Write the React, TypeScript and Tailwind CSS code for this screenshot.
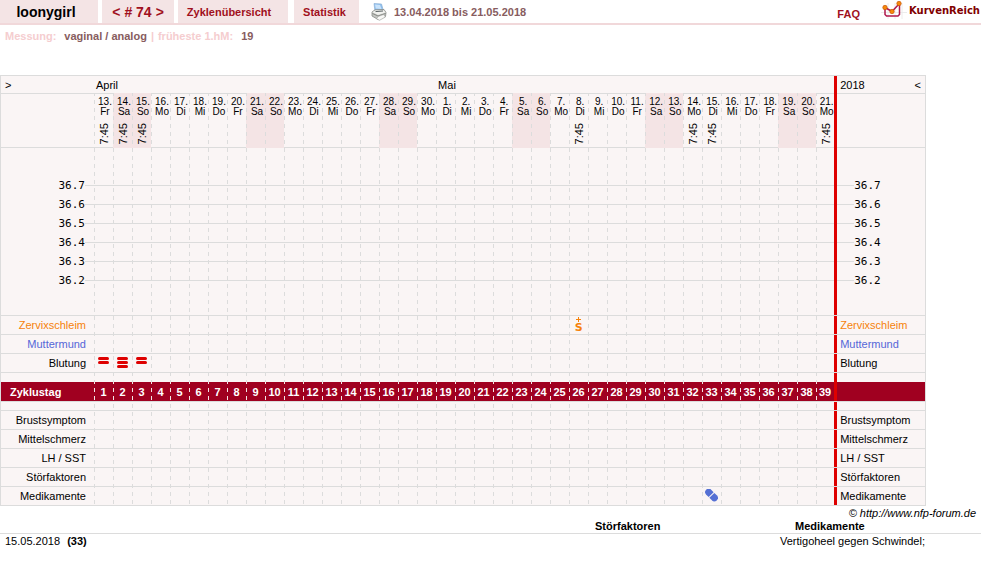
import React from 'react';

const WEEKDAYS = ['Fr', 'Sa', 'So', 'Mo', 'Di', 'Mi', 'Do'];
const TIMES: Record<number, string> = {
  1: '7:45', 2: '7:45', 3: '7:45', 26: '7:45', 32: '7:45', 33: '7:45', 39: '7:45',
};
const BLEEDING: Record<number, number> = { 1: 2, 2: 3, 3: 2 };
const TEMPERATURES = ['36.7', '36.6', '36.5', '36.4', '36.3', '36.2'];

const DAYS = Array.from({ length: 39 }, (_, i) => {
  const weekday = WEEKDAYS[i % 7];
  return {
    cycleDay: i + 1,
    date: i < 18 ? 13 + i : i - 17,
    weekday,
    weekend: weekday === 'Sa' || weekday === 'So',
    time: TIMES[i + 1],
  };
});

const dash = 'bg-[linear-gradient(#dcdcdc_4px,transparent_4px)] bg-[length:1px_8px] bg-repeat-y';
const midLine = 'bg-[linear-gradient(#dcdcdc,#dcdcdc)] bg-[length:100%_1px] bg-[position:0_9px] bg-no-repeat';
const rightTopLine = 'bg-[linear-gradient(#dcdcdc,#dcdcdc)] bg-[length:100%_1px] bg-[position:3px_0] bg-no-repeat';
const line = 'border-t border-[#dcdcdc]';

function Spacer({ height, lined = true }: { height: string; lined?: boolean }) {
  const edge = lined ? line : '';
  return (
    <tr className={height}>
      <td className={edge} />
      {DAYS.map((d) => (
        <td key={d.cycleDay} className={edge} />
      ))}
      <td className={edge} />
    </tr>
  );
}

function SymptomRow({
  label,
  color = 'text-black',
  render,
}: {
  label: string;
  color?: string;
  render?: (day: number) => React.ReactNode;
}) {
  return (
    <tr className="h-[19px]">
      <th scope="row" className={`${line} ${color} pr-2 text-right font-normal`}>{label}</th>
      {DAYS.map((d) => (
        <td key={d.cycleDay} className={`${line} ${color}`}>{render?.(d.cycleDay)}</td>
      ))}
      <td className={`${line} ${color} pl-1.5`}>{label}</td>
    </tr>
  );
}

function Bleeding({ level }: { level: number }) {
  return (
    <svg width="13" height="12" viewBox="0 0 13 12" className="mx-auto block" aria-hidden="true">
      {Array.from({ length: level }, (_, i) => (
        <rect key={i} x="1" y={i * 4} width="11" height="3" rx="1.5" fill="#de0000" />
      ))}
    </svg>
  );
}

/* A small cross above the quality letter */
function Mucus() {
  return (
    <div className="flex flex-col items-center font-['DejaVu_Sans',sans-serif] font-bold">
      <svg width="5" height="5" viewBox="0 0 5 5" className="block" aria-hidden="true">
        <path d="M2 0H3V2H5V3H3V5H2V3H0V2H2Z" fill="currentColor" />
      </svg>
      <span className="text-[11px] leading-[11px]">S</span>
    </div>
  );
}

function Pill() {
  return (
    <svg width="13" height="14" viewBox="0 0 13 14" className="mx-auto block" aria-hidden="true">
      <g transform="rotate(45 6.500 6)" fill="#5570d4">
        <path d="M6 2.500V9.500H2.500A3.500 3.500 0 0 1 2.500 2.500Z" />
        <path d="M7 2.500H10.500A3.500 3.500 0 0 1 10.500 9.500H7Z" />
      </g>
    </svg>
  );
}

function Printer() {
  return (
    <svg width="16" height="18" viewBox="0 0 16 18" aria-hidden="true">
      <path d="M3 .5 10.500 1 12.500 8 4 8.500Z" fill="#8fc0ee" stroke="#8fb2d6" strokeWidth=".7" />
      <path d="M4 1.500 9 2 10.500 6 4.800 5.500Z" fill="#c9e3fb" />
      <path d="M1 9 4 6.800 13 6.500 15 9.500 14.500 13.500 7 16.500 1 13Z" fill="#c4c6c2" stroke="#888a86" strokeWidth=".8" />
      <path d="M1.300 9.200 4.300 7.600 12.800 7.200 14.500 9.600 7 12Z" fill="#f1f2ef" />
      <path d="M4.500 8.600 12 8" stroke="#5f6668" strokeWidth="1" />
      <path d="M1.500 10.500 7 13 14.500 10.500" fill="none" stroke="#777a76" strokeWidth=".8" />
      <path d="M7 13.500 12.500 11.500 14.500 14 8.500 17.300 5.500 15.800Z" fill="#f8f8f6" stroke="#999b97" strokeWidth=".6" />
    </svg>
  );
}

function Logo() {
  return (
    <svg width="26" height="19" viewBox="0 0 26 19" aria-hidden="true">
      <path d="M0 12.500H26M7 3V19M14 3V19M21 3V19" stroke="#ececec" strokeWidth="1" />
      <path d="M4 7V14.500L5.500 16H17L18.500 14.500V5M4 7.500 11 11.500 18 4" fill="none" stroke="#b0184c" strokeWidth="1.500" />
      <g fill="#f68a0a" stroke="#c8560a" strokeWidth=".7">
        <circle cx="4" cy="7.500" r="2.200" />
        <circle cx="11" cy="11.500" r="2.200" />
        <circle cx="18" cy="3.500" r="2.200" />
      </g>
    </svg>
  );
}

const tab = 'flex h-full items-center justify-center bg-[#f4e4e5]';

export default function App() {
  return (
    <div className="min-h-screen bg-white font-['Liberation_Sans',Arial,sans-serif] text-[11px] leading-[14px] text-black">
      <header className="flex h-[25px] items-center border-b-2 border-[#f1d8da] font-bold text-[#a01020]">
        <nav className="flex h-full items-center">
          <a href="#profil" className={`${tab} mr-1 w-[98px] pr-1.5 text-[14px] text-black`}>loonygirl</a>
          <div className={`${tab} mr-1 w-[72px] gap-1 text-[14px]`}>
            <a href="#vorheriger" aria-label="Vorheriger Zyklus">&lt;</a>
            <span># 74</span>
            <a href="#naechster" aria-label="Nächster Zyklus">&gt;</a>
          </div>
          <a href="#zyklen" className={`${tab} mr-1.5 w-[110px] pr-2`}>Zyklenübersicht</a>
          <a href="#statistik" className={`${tab} mr-3 w-[65px] pr-1`}>Statistik</a>
          <a href="#drucken" aria-label="Drucken" className="mr-[7px]"><Printer /></a>
          <span className="text-[#875c5e]">13.04.2018 bis 21.05.2018</span>
        </nav>
        <a href="#faq" className="mr-[21px] ml-auto pt-1">FAQ</a>
        <a href="#start" className="flex h-full items-start gap-0.5 font-['DejaVu_Sans',sans-serif] text-[#800000]">
          <Logo />
          <span className="pt-1 pr-px text-[10px]">KurvenReich</span>
        </a>
      </header>

      <div className="flex h-[22px] items-center pl-[5px] font-bold text-[#875c5e]">
        <span className="mr-2 text-[#f5cdcf]">Messung:</span>
        <span className="mr-1">vaginal / analog</span>
        <span className="mr-1 text-[#f5cdcf]">|</span>
        <span className="mr-2 text-[#f5cdcf]">früheste 1.hM:</span>
        <span>19</span>
      </div>

      <main className="mt-7">
        <div className="mr-[55px] min-w-[926px] border border-[#dcdcdc] bg-[#faf5f5]">
          <table className="w-full table-fixed border-separate border-spacing-0 [&_td]:py-0 [&_th]:py-0">
            <colgroup>
              <col className="w-[93px]" />
              {DAYS.map((d) => (
                <col key={d.cycleDay} className={d.cycleDay === 39 ? `w-[18px] ${dash}` : `w-[19px] ${dash}`} />
              ))}
              <col className="bg-[linear-gradient(to_right,#de0000_3px,transparent_3px)]" />
            </colgroup>
            <thead>
              <tr className="h-[17px]">
                <th className="pl-1 text-left font-normal"><a href="#zurueck" aria-label="Zurück">&gt;</a></th>
                <th colSpan={18} className="bg-[#faf5f5] pl-0.5 text-left font-normal">April</th>
                <th colSpan={21} className="bg-[#faf5f5] pl-0.5 text-left font-normal">Mai</th>
                <th className="pr-1 pl-1.5 font-normal">
                  <div className="flex justify-between">
                    <span>2018</span>
                    <a href="#weiter" aria-label="Weiter">&lt;</a>
                  </div>
                </th>
              </tr>
              <tr className="h-[54px]">
                <td className={line} />
                {DAYS.map((d) => (
                  <th
                    key={d.cycleDay}
                    scope="col"
                    className={`align-top text-[10px] leading-[10px] font-normal ${
                      d.weekend ? `${dash} bg-[#f4e4e5] bg-[position:0_-1px]` : line
                    }`}
                  >
                    <div className={`flex flex-col items-center pl-[3px] ${d.weekend ? 'pt-1' : 'pt-[3px]'}`}>
                      <span>{d.date}.</span>
                      <span>{d.weekday}</span>
                      {d.time && (
                        <span className="mt-1.5 mr-0.5 rotate-180 text-[11px] leading-3 [writing-mode:vertical-rl]">{d.time}</span>
                      )}
                    </div>
                  </th>
                ))}
                <td className={rightTopLine} />
              </tr>
            </thead>
            <tbody>
              <tr className="h-[29px]">
                <td className={line} />
                {DAYS.map((d) => (
                  <td key={d.cycleDay} className={d.weekend ? 'border-t border-[#f4e4e5]' : line} />
                ))}
                <td className={rightTopLine} />
              </tr>
              {TEMPERATURES.map((t) => (
                <tr key={t} className="h-[19px] font-['DejaVu_Sans_Mono',monospace]">
                  <th scope="row" className="font-normal">
                    <div className="flex items-center justify-end">
                      {t}<span className="h-px w-[9px] bg-[#dcdcdc]" />
                    </div>
                  </th>
                  {DAYS.map((d) => (
                    <td key={d.cycleDay} className={midLine} />
                  ))}
                  <td className="pl-[3px]">
                    <div className="flex items-center">
                      <span className="h-px w-[17px] bg-[#dcdcdc]" />{t}
                    </div>
                  </td>
                </tr>
              ))}
              <Spacer height="h-[25px]" lined={false} />
              <SymptomRow label="Zervixschleim" color="text-[#f6820a]" render={(day) => day === 26 && <Mucus />} />
              <SymptomRow label="Muttermund" color="text-[#5566d8]" />
              <SymptomRow label="Blutung" render={(day) => BLEEDING[day] && <Bleeding level={BLEEDING[day]} />} />
              <Spacer height="h-[10px]" />
              <tr className="h-[19px] font-bold text-white">
                <th scope="row" className="bg-[#a00020] pl-[9px] text-left">Zyklustag</th>
                {DAYS.map((d) => (
                  <td
                    key={d.cycleDay}
                    className="bg-[#a00020] bg-[linear-gradient(#f4e4e5_4px,transparent_4px)] bg-[length:1px_8px] bg-[position:0_-2px] bg-repeat-y text-center"
                  >
                    {d.cycleDay}
                  </td>
                ))}
                <td className="bg-[linear-gradient(to_right,#de0000_3px,#a00020_3px)]" />
              </tr>
              <Spacer height="h-[9px]" />
              <SymptomRow label="Brustsymptom" />
              <SymptomRow label="Mittelschmerz" />
              <SymptomRow label="LH / SST" />
              <SymptomRow label="Störfaktoren" />
              <SymptomRow label="Medikamente" render={(day) => day === 33 && <Pill />} />
            </tbody>
          </table>
        </div>
        <p className="pr-[5px] text-right italic">© http://www.nfp-forum.de</p>
        <table className="w-full table-fixed border-separate border-spacing-0">
          <colgroup>
            <col className="w-[595px]" />
            <col className="w-[185px]" />
            <col />
          </colgroup>
          <thead>
            <tr className="text-left leading-[13px]">
              <td />
              <th>Störfaktoren</th>
              <th className="pl-[15px]">Medikamente</th>
            </tr>
          </thead>
          <tbody>
            <tr className="leading-[14px]">
              <td className="border-t border-[#dcdcdc] pl-[5px]">15.05.2018 <b className="ml-1">(33)</b></td>
              <td className="border-t border-[#dcdcdc]" />
              <td className="border-t border-[#dcdcdc]">Vertigoheel gegen Schwindel;</td>
            </tr>
          </tbody>
        </table>
      </main>
    </div>
  );
}
